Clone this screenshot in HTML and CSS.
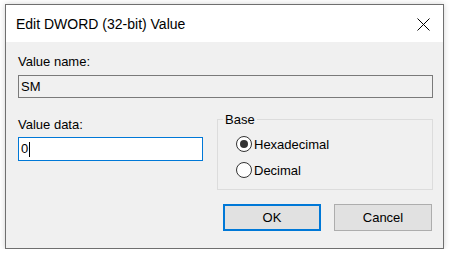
FILE: index.html
```html
<!DOCTYPE html>
<html lang="en">
<head>
    <meta charset="UTF-8">
    <title>Edit DWORD (32-bit) Value</title>
    <link rel="stylesheet" href="styles.css">
</head>
<body>
    <div class="window">
        <div class="titlebar">
            <span class="title">Edit DWORD (32-bit) Value</span>
            <svg class="close" width="13" height="13" viewBox="0 0 13 13">
                <path d="M0.5 0.5 L12.5 12.5 M12.5 0.5 L0.5 12.5" stroke="#000" stroke-width="1" fill="none"/>
            </svg>
        </div>
        <div class="content">
            <label class="lbl name-lbl">Value name:</label>
            <div class="namebox">SM</div>

            <div class="row">
                <div class="datacol">
                    <label class="lbl data-lbl">Value data:</label>
                    <div class="databox">0<span class="caret"></span></div>
                </div>
                <fieldset class="base">
                    <legend>Base</legend>
                    <div class="radio"><span class="dot checked"></span>Hexadecimal</div>
                    <div class="radio"><span class="dot"></span>Decimal</div>
                </fieldset>
            </div>

            <div class="buttons">
                <button class="btn ok">OK</button>
                <button class="btn">Cancel</button>
            </div>
        </div>
    </div>
</body>
</html>
```

FILE: styles.css
```css
body {
    margin: 0;
    background-color: #ffffff;
    font-family: "Liberation Sans", Arial, sans-serif;
    color: #000;
}

.window {
    margin: 4px 0 0 5px;
    width: 439px;
    height: 245px;
    box-sizing: border-box;
    border: 1px solid #6f6f6f;
    box-shadow: 0 0 6px rgba(0, 0, 0, 0.18);
    display: flex;
    flex-direction: column;
}

.titlebar {
    height: 37px;
    background-color: #ffffff;
    display: flex;
    align-items: center;
    justify-content: space-between;
    padding: 0 13px 0 10px;
}

.title {
    font-size: 14px;
    padding-top: 1px;
}

.close {
    display: block;
    margin-top: 1px;
}

.content {
    flex: 1;
    background-color: #f0f0f0;
    padding: 12px 10px 0 12px;
}

.lbl {
    display: block;
    font-size: 13px;
    line-height: 15px;
}

.namebox {
    margin-top: 6px;
    height: 23px;
    box-sizing: border-box;
    border: 1px solid #7a7a7a;
    background-color: #f0f0f0;
    font-size: 13px;
    line-height: 21px;
    padding-left: 2px;
}

.row {
    display: flex;
    justify-content: space-between;
}

.datacol {
    width: 185px;
    padding-top: 19px;
}

.databox {
    margin-top: 5px;
    height: 24px;
    box-sizing: border-box;
    border: 1px solid #0078d7;
    background-color: #ffffff;
    font-size: 13px;
    line-height: 22px;
    padding-left: 2px;
    display: flex;
    align-items: center;
}

.caret {
    display: inline-block;
    width: 1px;
    height: 15px;
    background-color: #000;
    margin-left: 1px;
}

.base {
    width: 216px;
    height: 78px;
    box-sizing: border-box;
    margin: 14px 0 0 0;
    padding: 4px 0 0 0;
    border: 1px solid #dcdcdc;
    font-size: 13px;
}

.base legend {
    padding: 0 2px;
    margin-left: 5px;
}

.radio {
    display: flex;
    align-items: center;
    height: 26px;
    padding-left: 18px;
}

.dot {
    width: 16px;
    height: 16px;
    box-sizing: border-box;
    border: 1px solid #333;
    border-radius: 50%;
    background-color: #fff;
    margin-right: 2px;
    position: relative;
}

.dot.checked::after {
    content: "";
    position: absolute;
    left: 3px;
    top: 3px;
    width: 8px;
    height: 8px;
    border-radius: 50%;
    background-color: #333;
}

.buttons {
    display: flex;
    justify-content: flex-end;
    gap: 13px;
    margin-top: 14px;
    padding-right: 1px;
}

.btn {
    width: 98px;
    height: 27px;
    box-sizing: border-box;
    background-color: #e1e1e1;
    border: 1px solid #adadad;
    font-family: "Liberation Sans", Arial, sans-serif;
    font-size: 13px;
    color: #000;
    padding: 0;
}

.btn.ok {
    border: 2px solid #0078d7;
}
```
